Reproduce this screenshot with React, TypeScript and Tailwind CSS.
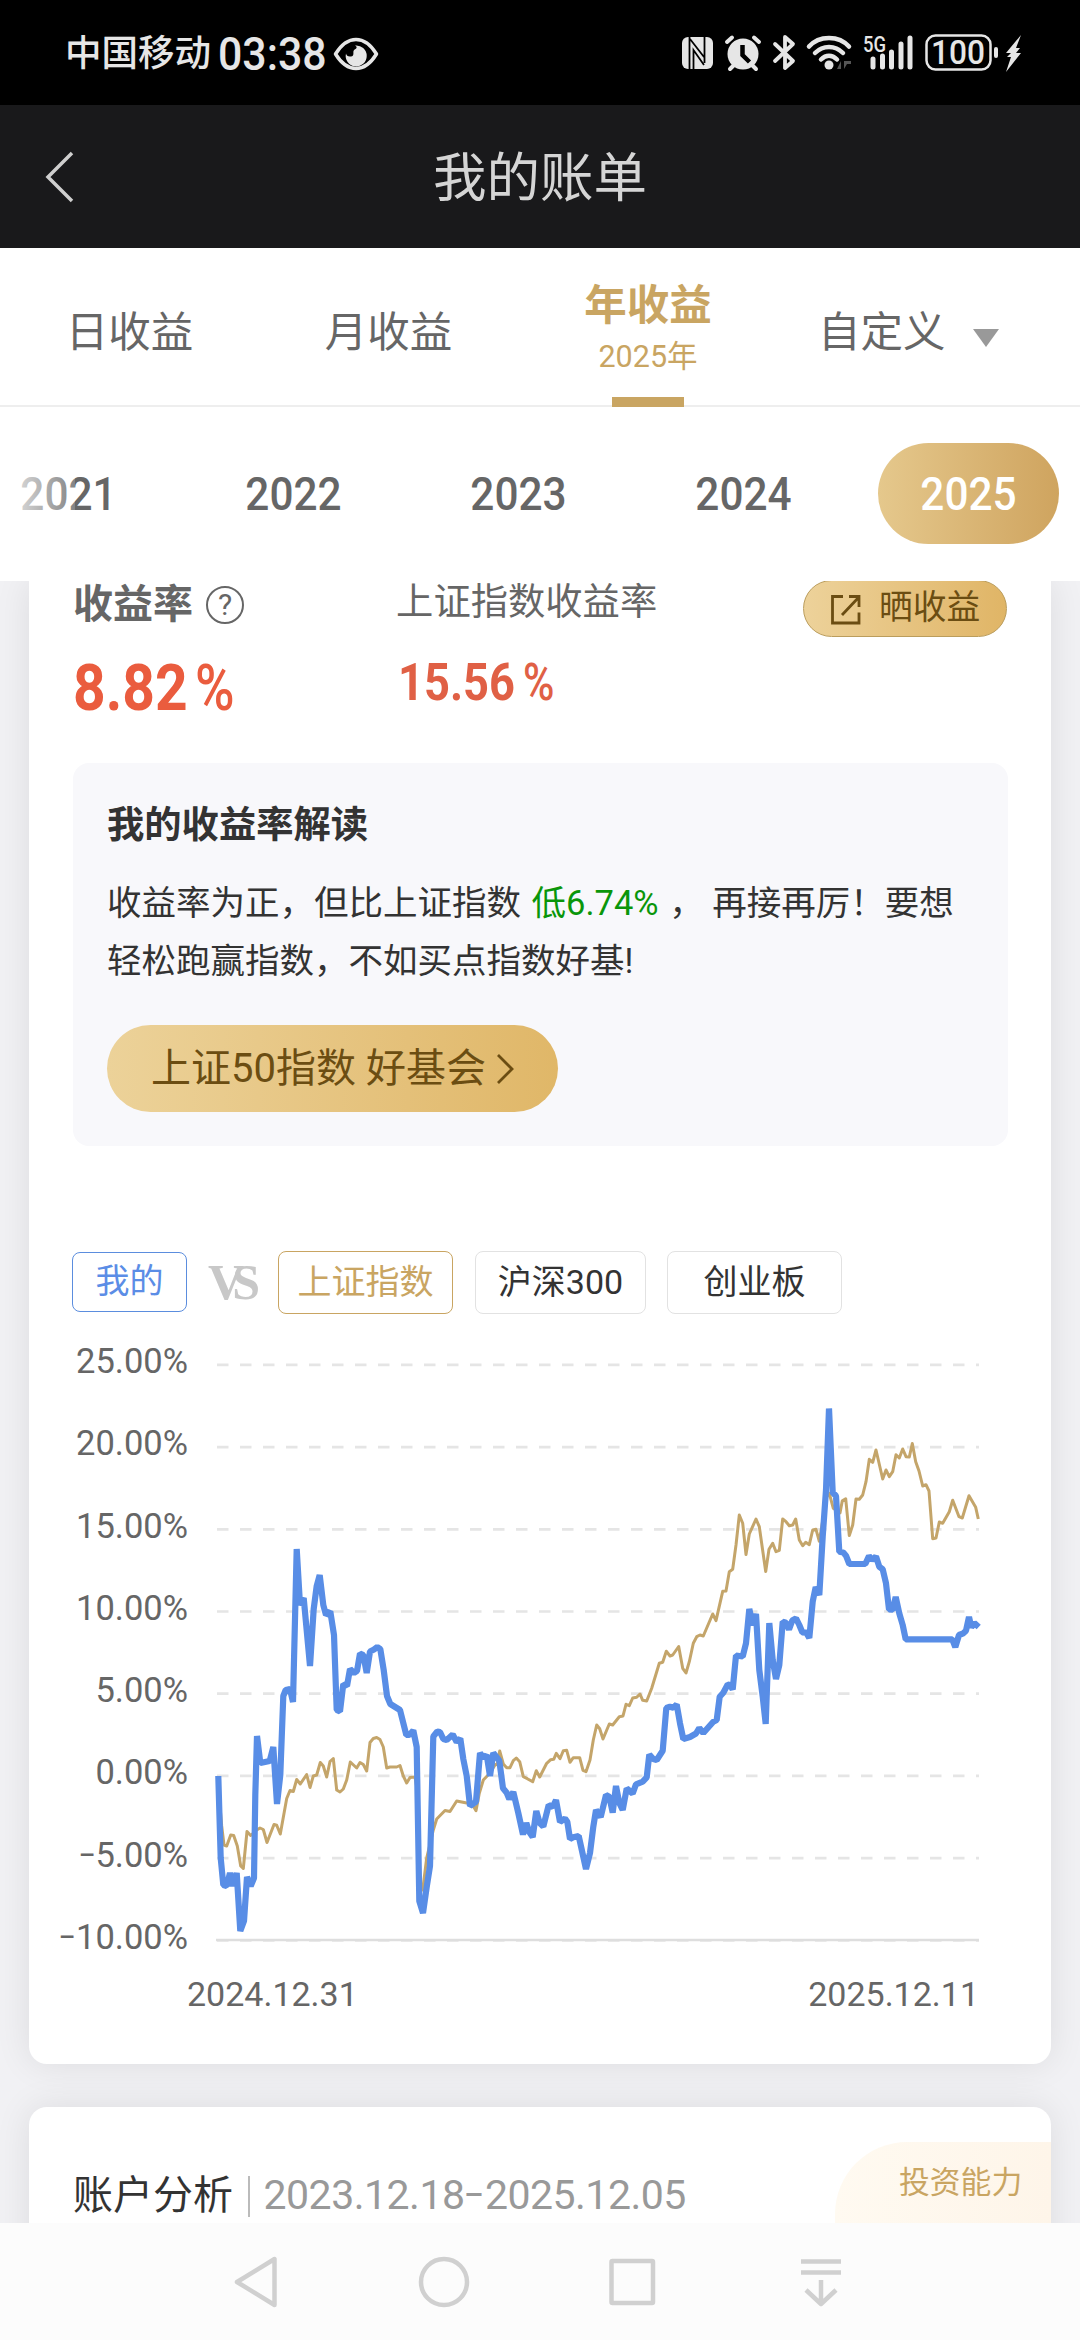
import React from 'react';

type Point = [number, number];

const TABS = ['日收益', '月收益'];
const YEARS = ['2021', '2022', '2023', '2024', '2025'];
const Y_VALUES = [25, 20, 15, 10, 5, 0, -5, -10];

// Curva da conta do usuário
const MINE: Point[] = [
  [18.3, 436], [20.7, 518], [23.3, 545], [26.7, 546], [30, 533], [33, 546], [36.7, 533], [40.3, 591], [44, 581],
  [47, 537], [50.7, 546], [54, 538], [55.3, 455], [57, 396], [60.3, 423], [69.7, 421], [73.3, 407], [77, 464],
  [80.3, 435], [83.3, 356], [85.7, 350], [90, 349], [93, 362], [96.7, 209], [100, 265], [103.7, 258], [110, 326],
  [113.7, 269], [116.7, 246], [119.7, 235], [123.3, 265], [126, 275], [130.3, 271.5], [134, 295], [136.7, 370],
  [140, 371.5], [143.3, 344], [147, 346], [150, 329], [154, 333], [157, 331], [160, 313.5], [163.3, 315],
  [166.7, 333], [170, 311.5], [174, 309.5], [177.3, 307], [180.3, 309], [183.7, 330], [187, 356], [190.3, 364],
  [200, 370], [206.3, 395], [209.3, 395], [213.3, 390.5], [216.7, 407], [219.3, 561], [223, 573], [226.7, 547],
  [230, 526], [233.3, 396.5], [237.3, 391.5], [240, 392], [243.3, 399], [246.7, 400], [252.7, 394.5], [256.7, 402],
  [260.3, 398.5], [263.3, 419], [266.7, 436], [270, 466], [276, 461.7], [280, 413], [283.5, 418], [286.7, 415],
  [290, 436], [293.3, 413], [299.3, 420.7], [303, 448.3], [306.7, 452.7], [309.3, 459], [313.3, 452], [318.3, 473],
  [323, 494.5], [326.3, 483], [329.3, 492], [332.7, 497], [336.3, 471], [339.7, 483], [343.3, 486.5], [348.7, 465],
  [352.7, 467], [356, 460], [360, 482], [365, 478.5], [367.3, 481.7], [370, 499], [373.3, 497.3], [378.7, 496],
  [386, 529], [390, 513], [393.3, 486.7], [396, 470], [400.7, 477], [406, 455], [409.3, 456.7], [412.7, 472.5],
  [416, 446], [419.3, 463], [422.7, 470], [426.7, 448.5], [432.7, 453.5], [436, 444.3], [442.7, 441.7],
  [446.7, 437.3], [449.3, 414.5], [453.3, 419], [456.7, 420], [462.7, 410.7], [466.3, 368], [470, 366.7],
  [473.3, 367.7], [476.7, 364.5], [480, 383.3], [483.3, 399], [490, 397], [496, 393.5], [499.3, 388], [503.3, 393],
  [513.3, 381.7], [516.7, 380], [519.7, 356.7], [523.3, 352.7], [527.7, 344.5], [530.3, 345], [532.7, 349.5],
  [536, 315.5], [542.7, 316.5], [546, 303.3], [549.3, 269], [552.7, 285], [556, 274], [559.3, 330], [562.7, 356.7],
  [565.7, 384], [569.3, 283], [572.7, 320], [576, 339], [579.3, 325], [582.7, 281.7], [586, 282.7], [589, 289.5],
  [592.3, 280.5], [596, 278.3], [599.3, 285], [602.3, 292.3], [606.3, 292.7], [609.3, 298], [612.7, 261.7],
  [615.7, 247], [619.3, 255], [622.7, 196.7], [626, 150], [629, 68.5], [632.7, 152.5], [636, 156], [639.3, 211.7],
  [643.3, 212.5], [646, 215.7], [649.3, 224], [665.3, 224], [669, 216], [672.7, 220], [676, 216.5], [679.3, 226.7],
  [682.7, 229.3], [686, 243.3], [689, 269.5], [692.7, 269.7], [695.7, 257], [699.3, 273.3], [702.7, 285],
  [705.7, 299.3], [752.3, 299.3], [755.3, 307], [759, 295], [763.3, 293.3], [766, 290.7], [769, 277], [771.3, 287.3],
  [774.3, 283], [778.7, 287],
];

// Curva do índice de Xangai
const INDEX: Point[] = [
  [19, 455], [21.7, 486], [24, 505], [26.7, 506], [30.7, 495], [33.7, 495.5], [37.3, 506], [40.7, 526], [43.3, 528.5],
  [47, 491.5], [50.7, 495.5], [56.7, 490], [60, 488], [63.3, 489.5], [67, 502.5], [74, 484.5], [76.7, 485.3],
  [80.3, 494], [86.7, 458.5], [90, 450.5], [93.3, 451.5], [96.7, 439.5], [100.3, 444], [106.7, 434.5], [110, 447.5],
  [113.3, 436], [116.7, 435], [120.3, 422.5], [123.3, 426], [126.7, 437], [130, 421.5], [133.3, 418.5], [136.7, 450],
  [140, 452], [143.3, 449], [146.7, 440], [150.3, 422], [156.7, 428], [160, 422.5], [163.3, 424.5], [166.7, 431],
  [170, 402.5], [173.3, 398.5], [176.7, 397.5], [180, 399.5], [183.3, 407], [186.7, 428], [190, 427], [196.7, 427],
  [200, 425.5], [203.3, 436], [206.7, 443], [210, 437.5], [215, 437], [216.7, 447], [219.3, 546], [222.7, 550],
  [226.7, 518], [233.3, 490], [236.7, 479], [245, 470.5], [250, 471.5], [256.7, 461], [266.7, 463], [271.7, 463.3],
  [276, 470.7], [279.3, 453.3], [283.3, 440], [290, 433], [295, 425], [297.3, 424], [299.7, 411], [303.3, 424],
  [306.7, 427.7], [310, 427.7], [313.3, 420.7], [316.3, 418], [319.7, 421.7], [323.3, 436.7], [327.3, 438.7],
  [332.7, 441.7], [336.3, 430.7], [339.7, 437], [346.7, 423.3], [350.7, 419.7], [353.7, 419.3], [356.3, 413.3],
  [360, 418.7], [363.3, 410.7], [366.7, 410.3], [370, 422.3], [373.3, 417.7], [379.7, 417.7], [383, 430.3],
  [386, 431.7], [390, 420], [393.3, 400], [396.7, 385], [399.7, 388.7], [403, 399], [409.3, 384], [412.7, 385],
  [419.3, 376.7], [423, 376], [426, 364.3], [429.3, 365.7], [432.7, 358], [436.7, 357.3], [440, 354], [442.7, 360.3],
  [446.7, 361], [451.7, 348.3], [459.3, 323.3], [462.7, 322.3], [466.3, 311.3], [470, 316], [472.7, 315],
  [478.7, 306.5], [482.7, 328.3], [486, 333], [489.3, 321.7], [493.3, 303.3], [496.7, 296.7], [500, 295],
  [503.3, 296], [512.7, 274], [516, 280.7], [522.7, 251.3], [526, 251], [529.3, 231.7], [532.7, 229.3], [536, 205],
  [539.3, 175], [542.7, 183.3], [546, 214.5], [549.3, 194], [556, 179], [559.3, 186.7], [565.7, 231.5], [569, 209.3],
  [572.7, 203.3], [576, 211.7], [579.3, 210.3], [582.7, 179], [586, 181.7], [589.3, 185.7], [592.7, 185],
  [595.7, 179], [599.3, 200], [602.7, 205.7], [605.7, 202.3], [609.3, 204.7], [612.7, 190], [616, 189.3],
  [619.3, 201.3], [626.7, 156.7], [629.3, 153.3], [633.3, 168.3], [640, 173], [642.3, 160.7], [645.7, 158.7],
  [649.3, 195.5], [652.7, 185], [656, 159], [659.3, 159.3], [662.7, 155], [666, 141.7], [669.3, 119.3],
  [672.7, 122.3], [676, 110], [682.7, 139], [686, 130], [689.3, 136.7], [692.7, 131.7], [696, 114.7], [699.3, 118],
  [702.7, 109], [706, 116.7], [709.3, 117], [712.3, 103.5], [715.7, 121.7], [719, 131], [722.7, 146], [726, 144.7],
  [729, 151], [732.7, 198.7], [736, 198], [739.3, 182], [742.7, 183.3], [749.3, 171.7], [752.7, 160.3], [759, 176.7],
  [762.3, 178], [769, 155.7], [775.7, 167.3], [778.3, 179],
];

const toPoints = (data: Point[]) => data.map(p => p.join(',')).join(' ');

const StatusBar = () => (
  <div className="h-[105px] bg-black flex items-center pt-[3px] pl-[65px] text-[#e6e6e6]">
    <span className="text-[36.5px] leading-none font-medium w-[153px]">中国移动</span>
    <span className="text-[46px] leading-none font-medium w-[114px]">
      <span className="inline-block origin-left scale-x-[0.93]">03:38</span>
    </span>
    <svg width="46" height="34" viewBox="0 0 46 34" className="ml-[1px]">
      <path d="M2.5 17C9 6.500 15.500 2.500 23 2.500S37 6.500 43.500 17C37 27.500 30.500 31.500 23 31.500S9 27.500 2.500 17Z" fill="none" stroke="#e6e6e6" strokeWidth="3.500" strokeLinejoin="round" />
      <path d="M22 8.500A10.500 10.500 0 1 1 13 16.500C13.500 18.500 15 20 18 19.500C21.500 19 20 16 20.500 14C21 12 23 12.500 23.500 11C24 9.500 23 9 22 8.500Z" fill="#e6e6e6" />
    </svg>
    <svg width="350" height="50" viewBox="0 -5 350 50" className="ml-[302px]" fill="#e6e6e6">
      {/* NFC */}
      <rect x="1" y="3" width="31" height="32" rx="6" />
      <path d="M8.500 3v32M23.500 3v26M9 5l14 18M12.500 35V16L23 31" fill="none" stroke="#000" strokeWidth="1.800" />
      {/* alarm */}
      <circle cx="62" cy="20" r="15.500" />
      <path d="M46 8l5-4.500M78 8l-5-4.500M53 31l-4 4M71 31l4 4" stroke="#e6e6e6" strokeWidth="4" strokeLinecap="round" />
      <path d="M61.500 11v10l7 7" fill="none" stroke="#000" strokeWidth="4.500" />
      {/* bluetooth */}
      <path d="M94 10l18 17-8 7V3l8 7-18 17" fill="none" stroke="#e6e6e6" strokeWidth="3.800" strokeLinejoin="round" strokeLinecap="round" />
      {/* wifi */}
      <g fill="none" stroke="#e6e6e6" strokeWidth="4.500" strokeLinecap="round">
        <path d="M128 12.500c10-11.500 30-11.500 40 0M134 19c8-8 20-8 28 0M140 25.500c5-5 11-5 16 0" />
      </g>
      <circle cx="148" cy="31" r="4.500" />
      <path d="M160 27v8h-4ZM163 27v8l3-5h4v-3Z" fill="#555" />
      {/* signal */}
      <path d="M192 25v8M201.500 22v11M210.500 18v15M220 10v23M229 4v29" stroke="#e6e6e6" strokeWidth="5" strokeLinecap="round" />
      <text x="182" y="18" fontFamily="Roboto" fontWeight="500" fontSize="22" textLength="23" lengthAdjust="spacingAndGlyphs">5G</text>
      {/* battery */}
      <rect x="245.500" y="1.500" width="64" height="34" rx="9" fill="none" stroke="#e6e6e6" strokeWidth="2.500" />
      <rect x="313" y="13" width="4" height="11" rx="2" />
      <text x="250" y="30" fontFamily="Roboto" fontWeight="500" fontSize="33" textLength="54" lengthAdjust="spacingAndGlyphs">100</text>
      <path d="M340 1L325 19h5l-4 4h4l-5 15 15-19h-5l4-5h-4Z" />
    </svg>
  </div>
);

const ReturnChart = () => (
  <div className="flex h-[620px]">
    <div className="w-[159px] mt-[-1px] shrink-0">
      {Y_VALUES.map(value => (
        <div key={value} className="h-[82.3px] leading-[44px] text-[34.5px] text-[#666] text-right whitespace-nowrap">
          {value < 0 && <span className="inline-block origin-right scale-x-75">–</span>}
          {Math.abs(value).toFixed(2)}%
        </div>
      ))}
    </div>
    <svg width="800" height="620" viewBox="0 0 800 620" className="shrink-0 ml-[12px]">
      {Y_VALUES.map((value, i) => (
        <line key={value} x1="17" x2="779" y1={24.9 + i * 82.2} y2={24.9 + i * 82.2} stroke="#e5e5e5" strokeWidth="2.700" strokeDasharray="11.500 11.500" />
      ))}
      <line x1="16" x2="779" y1="600" y2="600" stroke="#dedede" strokeWidth="2.500" />
      <polyline points={toPoints(INDEX)} fill="none" stroke="#c4a56a" strokeWidth="3" strokeLinejoin="round" />
      <polyline points={toPoints(MINE)} fill="none" stroke="#588de6" strokeWidth="6.200" strokeLinejoin="bevel" />
    </svg>
  </div>
);

const App: React.FC = () => {
  return (
    <div className='w-[1080px] h-[2340px] overflow-hidden flex flex-col bg-white font-[Roboto,"Noto_Sans_CJK_SC",sans-serif] whitespace-nowrap'>
      <StatusBar />

      <header className="h-[143px] bg-[#19191b] flex items-center text-[#d5d5d5]">
        <svg width="30" height="54" viewBox="0 0 30 54" className="ml-[45px]">
          <path d="M27 3L3 27l24 24" fill="none" stroke="#cfcfcf" strokeWidth="3.500" />
        </svg>
        <h1 className="flex-1 text-center text-[53.5px] leading-none pr-[75px] pt-[5px]">我的账单</h1>
      </header>

      <nav className="h-[159px] border-b-2 border-[#eee] flex text-[42.500px] text-[#666]">
        {TABS.map(tab => (
          <div key={tab} className="w-[259px] leading-[170px] text-center">{tab}</div>
        ))}
        <div className="w-[260px] flex flex-col items-center text-[#c9a562]">
          <span className="font-bold leading-[60px] mt-[28px]">年收益</span>
          <span className="text-[30.5px] leading-[40px] mt-[1px]">2025年</span>
          <span className="w-[72px] h-[10px] bg-[#c9a562] mt-auto mb-[-2px]" />
        </div>
        <div className="flex items-center ml-[40px] pt-[13px]">
          <span>自定义</span>
          <span className="ml-[27px] mt-[10px] border-x-[13px] border-x-transparent border-t-[18px] border-t-[#999]" />
        </div>
      </nav>

      <div className="relative h-[174px] shrink-0 flex items-start gap-[44px] ml-[-22px] pt-[36px] text-[47px] font-medium text-[#666]">
        {YEARS.map(year => (
          <div
            key={year}
            className={`w-[181px] h-[101px] leading-[102px] text-center shrink-0 rounded-full ${year === '2025' ? 'bg-linear-to-r from-[#e5c88c] to-[#cfa45f] text-white' : ''}`}
          >
            <span className="inline-block scale-x-[0.9]">{year}</span>
          </div>
        ))}
        <div className="absolute left-[22px] top-0 w-[75px] h-full bg-linear-to-r from-white/90 to-white/20" />
      </div>

      <main className="h-[1642px] shrink-0 overflow-hidden bg-[#f1f1f4] px-[29px]">
        <section className="h-[1483px] bg-white rounded-b-[18px] shadow-[0_0_36px_rgba(0,0,0,0.09)] px-[44px]">
          <div className="flex h-[182px]">
            <div className="w-[324px]">
              <div className="flex items-center text-[40px] font-bold text-[#666] leading-[48px]">
                收益率
                <span className="ml-[13px] w-[38px] h-[38px] rounded-full border-[2.5px] border-[#666] text-[30px] leading-[34px] font-normal text-center">?</span>
              </div>
              <div className="flex items-center mt-[25px] leading-[70px] text-[#ea5c3e]">
                <span className="w-[122px] text-[64px] font-bold"><span className="inline-block origin-left scale-x-[0.89]">8.82</span></span>
                <span className="text-[64px] font-medium"><span className="inline-block origin-left scale-x-[0.84]">%</span></span>
              </div>
            </div>
            <div className="w-[408px]">
              <div className="text-[37.3px] text-[#666] leading-[42px]">上证指数收益率</div>
              <div className="flex items-center mt-[30px] ml-[2px] leading-[60px] text-[#e06045]">
                <span className="w-[125px] text-[52px] font-bold"><span className="inline-block origin-left scale-x-[0.87]">15.56</span></span>
                <span className="text-[52px] font-medium"><span className="inline-block origin-left scale-x-[0.82]">%</span></span>
              </div>
            </div>
            <button className="w-[204px] h-[57px] mt-[-1px] shrink-0 rounded-full border-[1.5px] border-[#bb9d5c] bg-linear-to-r from-[#edd29a] to-[#e0b566] flex items-center text-[33.7px] text-[#6b4d12]">
              <svg width="32" height="32" viewBox="0 0 32 32" className="ml-[26px] mr-[17px] mt-[3px]">
                <path d="M13 2.500H2.500V29H29V18.500M19 2.500h10V13M29 3L12 21" fill="none" stroke="#6b4d12" strokeWidth="2.800" />
              </svg>
              晒收益
            </button>
          </div>

          <div className="w-[935px] h-[383px] rounded-[16px] bg-[#f8f8fb] pl-[34px] pt-[38px] text-[#333]">
            <h2 className="text-[37.3px] font-bold leading-[48px]">我的收益率解读</h2>
            <p className="mt-[25px] text-[34.5px] leading-[58px]">
              收益率为正，但比上证指数 <span className="text-[#0a960a] mx-[2px]">低6.74%</span> ， 再接再厉！要想
              <br />
              轻松跑赢指数，不如买点指数好基!
            </p>
            <button className="mt-[35px] w-[451px] h-[87px] rounded-full bg-linear-to-r from-[#ecd299] to-[#e0b768] flex items-center pl-[44px] text-[40px] text-[#6b4d12]">
              上证50指数 好基会
              <svg width="20" height="32" viewBox="0 0 20 32" className="ml-[10px]">
                <path d="M2 2l14 14L2 30" fill="none" stroke="#6b4d12" strokeWidth="2.800" />
              </svg>
            </button>
          </div>

          <div className="flex items-center h-[64px] mt-[104px] ml-[-1px] text-[34px] text-[#333]">
            <span className="w-[115px] h-[60px] leading-[57px] rounded-[8px] border-[1.5px] border-[#5b8dde] text-[#5b8de6] text-center">我的</span>
            <span className='w-[91px] pl-[21px] font-["Liberation_Serif",serif] font-bold text-[51px] leading-[60px] text-[#c8c8c8]'>
              <span className="inline-block origin-left scale-x-[0.98] tracking-[-12px]">VS</span>
            </span>
            <span className="w-[175px] h-[63px] leading-[61px] rounded-[8px] border-[1.5px] border-[#c9a562] text-[#c9a562] text-center">上证指数</span>
            <span className="ml-[22px] w-[171px] h-[63px] leading-[61px] rounded-[8px] border-[1.5px] border-[#e2e2e2] text-center">沪深300</span>
            <span className="ml-[21px] w-[175px] h-[63px] leading-[61px] rounded-[8px] border-[1.5px] border-[#e2e2e2] text-center">创业板</span>
          </div>

          <div className="ml-[-44px] mt-[26px]">
            <ReturnChart />
            <div className="flex justify-between pl-[158px] pr-[28px] mt-[12px] text-[34px] leading-[44px] text-[#666]">
              <span>2024.12.31</span>
              <span>2025.12.11</span>
            </div>
          </div>
        </section>

        <section className="mt-[43px] h-[260px] bg-white rounded-t-[18px] shadow-[0_0_36px_rgba(0,0,0,0.09)] pl-[44px] pt-[35px] flex">
          <div className="flex items-center h-[108px] text-[40px] text-[#333]">
            账户分析
            <span className="ml-[15px] w-[1.5px] h-[41px] bg-[#bbb]" />
            <span className="ml-[14px] text-[41px] tracking-[-0.500px] text-[#999]">
              2023.12.18<span className="inline-block origin-left scale-x-75 mr-[-6px]">–</span>2025.12.05
            </span>
          </div>
          <div className="ml-auto w-[216px] h-full rounded-tl-[72px] bg-linear-to-r from-[#fffaf1] to-[#fef5e9] pl-[64px] pt-[15px] text-[30.800px] leading-[52px] text-[#c9a562]">投资能力</div>
        </section>
      </main>

      <footer className="h-[117px] shrink-0 bg-[#fcfcfc]">
        <svg width="1080" height="117" viewBox="0 0 1080 117" fill="none" stroke="#d0d0d0" strokeWidth="4.500" strokeLinejoin="round">
          <path d="M274.500 36v46L237 59Z" />
          <circle cx="444" cy="59" r="23" />
          <rect x="611.500" y="38" width="41.500" height="42" rx="1" />
          <path d="M801 38.500h40M801 49.500h40M821 57v23M806 67l15 14 15-14" />
        </svg>
      </footer>
    </div>
  );
};

export default App;
